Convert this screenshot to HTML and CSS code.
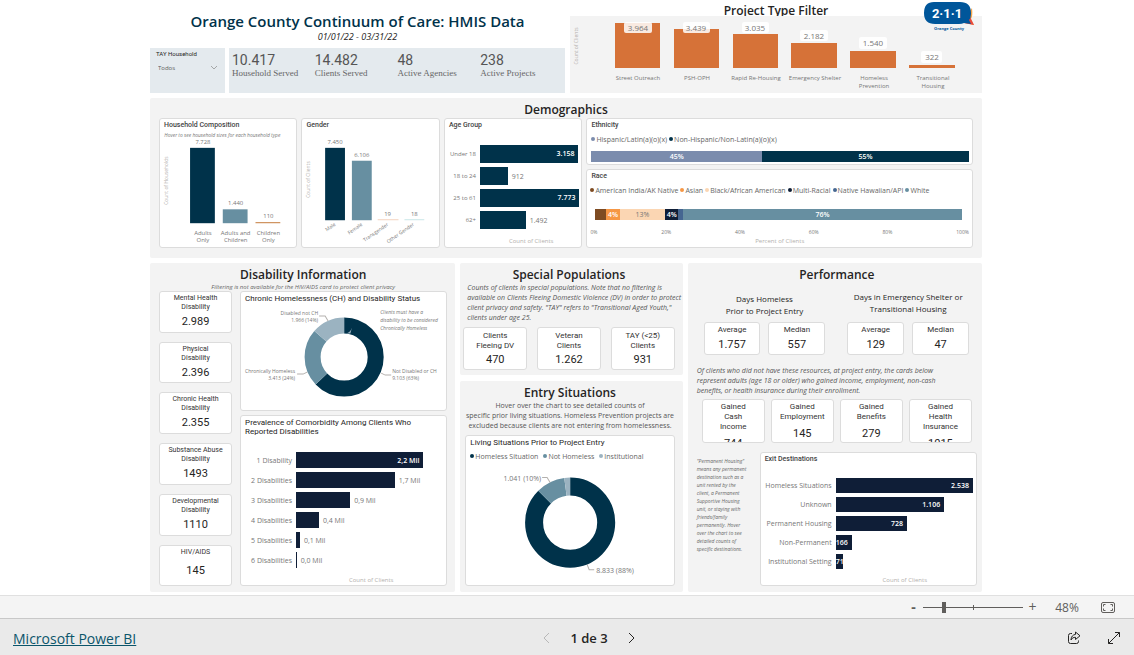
FILE: index.html
```html
<!DOCTYPE html>
<html lang="en">
<head>
<meta charset="utf-8">
<title>Orange County Continuum of Care: HMIS Data</title>
<link rel="stylesheet" href="styles.css">
</head>
<body>
<main class="report">
  <div class="top">
    <header class="intro">
      <h1 class="title">Orange County Continuum of Care: HMIS Data</h1>
      <p class="period">01/01/22 - 03/31/22</p>
      <div class="intro-row">
        <div class="slicer">
          <label class="slicer-label" for="tay">TAY Household</label>
          <select class="slicer-select" id="tay"><option>Todos</option></select>
          <svg class="slicer-arrow" viewBox="0 0 8 5"><path d="M1 1l3 3 3-3"/></svg>
        </div>
        <dl class="kpis">
          <div class="kpi"><dd>10.417</dd><dt>Household Served</dt></div>
          <div class="kpi"><dd>14.482</dd><dt>Clients Served</dt></div>
          <div class="kpi"><dd>48</dd><dt>Active Agencies</dt></div>
          <div class="kpi"><dd>238</dd><dt>Active Projects</dt></div>
        </dl>
      </div>
    </header>
    <section class="filter">
      <h2 class="filter-title">Project Type Filter</h2>
      <svg class="filter-chart" viewBox="0 0 412 77">
        <g fill="#d67238">
          <rect x="45" y="7" width="45" height="45"/><rect x="104" y="13" width="45" height="39"/><rect x="163" y="18" width="45" height="34"/>
          <rect x="221" y="27" width="46" height="25"/><rect x="280" y="35" width="46" height="17"/><rect x="339" y="49" width="46" height="3"/>
        </g>
        <g fill="#fff" fill-opacity=".85">
          <rect x="54" y="6" width="28" height="11" rx="2"/><rect x="113" y="6" width="27" height="11" rx="2"/><rect x="172" y="6" width="27" height="11" rx="2"/>
          <rect x="230" y="14" width="28" height="11" rx="2"/><rect x="289" y="21" width="28" height="12" rx="2"/><rect x="351" y="35" width="21" height="12" rx="2"/>
        </g>
        <g class="t8 mid grey">
          <text x="68" y="15">3.964</text><text x="126" y="15">3.439</text><text x="185" y="15">3.035</text><text x="244" y="23">2.182</text><text x="303" y="30">1.540</text><text x="362" y="44">322</text>
        </g>
        <g class="t6 mid grey">
          <text x="68" y="64">Street Outreach</text><text x="127" y="64">PSH-OPH</text><text x="186" y="64">Rapid Re-Housing</text><text x="245" y="64">Emergency Shelter</text>
          <text x="304" y="64">Homeless</text><text x="304" y="72">Prevention</text><text x="363" y="64">Transitional</text><text x="363" y="72">Housing</text>
        </g>
        <text class="t5 mid pale" transform="translate(8 30) rotate(-90)">Count of Clients</text>
      </svg>
      <svg class="logo" viewBox="0 0 52 31">
        <path d="M40 20l9-13q1 8-1 11l3 6-9-2z" fill="#f6a54a"/>
        <path d="M40 20l7-4 4 8-10-2z" fill="#e8483c"/>
        <path d="M11 1h26q11 0 11 11v1q0 4-2 6l2 4-7-1q-2 1-5 1H12Q1 23 1 12T11 1z" fill="#00569a"/>
        <text class="logo-num" x="24" y="17">2·1·1</text>
        <text class="logo-name" x="26" y="29">Orange County</text>
      </svg>
    </section>
  </div>

  <section class="panel demographics">
    <h2 class="heading">Demographics</h2>
    <div class="demo-row">
      <article class="card">
        <h3 class="card-title">Household Composition</h3>
        <svg class="fill-chart" viewBox="0 0 137 118">
          <text class="t5 italic grey" x="4" y="7">Hover to see household sizes for each household type</text>
          <rect x="30" y="18" width="25" height="76" fill="#00324a"/><rect x="63" y="80" width="25" height="14" fill="#678fa1"/><rect x="96" y="93" width="25" height="1" fill="#c47a3a"/>
          <g class="t6 mid grey"><text x="43" y="14">7.728</text><text x="76" y="76">1.440</text><text x="109" y="89">110</text>
          <text x="43" y="106">Adults</text><text x="43" y="113">Only</text><text x="76" y="106">Adults and</text><text x="76" y="113">Children</text><text x="109" y="106">Children</text><text x="109" y="113">Only</text></g>
          <text class="t5 mid pale" transform="translate(8 51) rotate(-90)">Count of Households</text>
        </svg>
      </article>
      <article class="card">
        <h3 class="card-title">Gender</h3>
        <svg class="fill-chart" viewBox="0 0 137 118">
          <rect x="23" y="18" width="20" height="73" fill="#00324a"/><rect x="50" y="31" width="20" height="60" fill="#678fa1"/><rect x="76" y="90" width="21" height="1" fill="#f3d3bf"/><rect x="103" y="90" width="20" height="1" fill="#c9e6e8"/>
          <g class="t6 mid grey"><text x="33" y="14">7.450</text><text x="60" y="27">6.106</text><text x="86" y="87">19</text><text x="113" y="87">18</text></g>
          <g class="t5 end grey"><text transform="translate(34 96) rotate(-35)">Male</text><text transform="translate(61 96) rotate(-35)">Female</text><text transform="translate(87 96) rotate(-35)">Transgender</text><text transform="translate(113 96) rotate(-35)">Other Gender</text></g>
          <text class="t5 mid pale" transform="translate(8 50) rotate(-90)">Count of Clients</text>
        </svg>
      </article>
      <article class="card">
        <h3 class="card-title">Age Group</h3>
        <div class="bars bars-age">
          <span>Under 18</span><div class="track"><b class="bar" style="width:99%">3.158</b></div>
          <span>18 to 24</span><div class="track"><b class="bar" style="width:28%"></b><i>912</i></div>
          <span>25 to 61</span><div class="track"><b class="bar" style="width:100%">7.773</b></div>
          <span>62+</span><div class="track"><b class="bar" style="width:46%"></b><i>1.492</i></div>
        </div>
        <p class="axis-title age-axis">Count of Clients</p>
      </article>
      <div class="stack">
        <article class="card ethnicity">
          <h3 class="card-title">Ethnicity</h3>
          <ul class="legend"><li class="c-slate">Hispanic/Latin(a)(o)(x)</li><li class="c-dark">Non-Hispanic/Non-Latin(a)(o)(x)</li></ul>
          <div class="strip"><b class="c-slate" style="width:45.2%">45%</b><b class="c-dark" style="width:54.8%">55%</b></div>
        </article>
        <article class="card race">
          <h3 class="card-title">Race</h3>
          <ul class="legend"><li class="c-brown">American India/AK Native</li><li class="c-orange">Asian</li><li class="c-peach">Black/African American</li><li class="c-navy">Multi-Racial</li><li class="c-blue">Native Hawaiian/API</li><li class="c-teal">White</li></ul>
          <div class="strip"><b class="c-brown" style="width:3%"></b><b class="c-orange" style="width:3.6%">4%</b><b class="c-peach" style="width:12.5%">13%</b><b class="c-navy" style="width:3.5%">4%</b><b class="c-blue" style="width:1.3%"></b><b class="c-teal" style="width:76.1%">76%</b></div>
          <div class="axis"><span>0%</span><span>20%</span><span>40%</span><span>60%</span><span>80%</span><span>100%</span></div>
          <p class="axis-title">Percent of Clients</p>
        </article>
      </div>
    </div>
  </section>

  <div class="lower">
    <section class="panel disability">
      <h2 class="heading">Disability Information</h2>
      <p class="sub">Filtering is not available for the HIV/AIDS card to protect client privacy</p>
      <div class="dis-row">
        <div class="dis-cards">
          <div class="card stat"><h3>Mental Health<br>Disability</h3><p>2.989</p></div>
          <div class="card stat"><h3>Physical<br>Disability</h3><p>2.396</p></div>
          <div class="card stat"><h3>Chronic Health<br>Disability</h3><p>2.355</p></div>
          <div class="card stat"><h3>Substance Abuse<br>Disability</h3><p>1493</p></div>
          <div class="card stat"><h3>Developmental<br>Disability</h3><p>1110</p></div>
          <div class="card stat"><h3>HIV/AIDS</h3><p>145</p></div>
        </div>
        <div class="dis-charts">
          <article class="card">
            <h3 class="card-title big">Chronic Homelessness (CH) and Disability Status</h3>
            <svg class="fill-chart" viewBox="0 0 205 107">
              <g fill="none" stroke-width="16" transform="rotate(-90 103 54)">
                <circle cx="103" cy="54" r="31.5" pathLength="100" stroke="#00324a" stroke-dasharray="62.8 37.2"/>
                <circle cx="103" cy="54" r="31.5" pathLength="100" stroke="#678fa1" stroke-dasharray="23.6 76.4" stroke-dashoffset="-62.8"/>
                <circle cx="103" cy="54" r="31.5" pathLength="100" stroke="#9bb3c1" stroke-dasharray="13.6 86.4" stroke-dashoffset="-86.4"/>
              </g>
              <g class="lead"><path d="M78 13h6l3 5M56 71h6l4-2M140 70l4 2h6"/></g>
              <g class="t5 end grey"><text x="77" y="12">Disabled not CH</text><text x="77" y="19">1.966 (14%)</text><text x="54" y="70">Chronically Homeless</text><text x="54" y="77">3.413 (24%)</text></g>
              <g class="t5 grey"><text x="151" y="70">Not Disabled or CH</text><text x="151" y="77">9.103 (63%)</text></g>
              <g class="t5 italic grey"><text x="139" y="11">Clients must have a</text><text x="139" y="19">disability to be considered</text><text x="139" y="27">Chronically Homeless</text></g>
            </svg>
          </article>
          <article class="card">
            <h3 class="card-title big wide">Prevalence of Comorbidity Among Clients Who Reported Disabilities</h3>
            <div class="bars bars-com">
              <span>1 Disability</span><div class="track"><b class="bar" style="width:100%">2,2 Mil</b></div>
              <span>2 Disabilities</span><div class="track"><b class="bar" style="width:77.5%"></b><i>1,7 Mil</i></div>
              <span>3 Disabilities</span><div class="track"><b class="bar" style="width:42.5%"></b><i>0,9 Mil</i></div>
              <span>4 Disabilities</span><div class="track"><b class="bar" style="width:18%"></b><i>0,4 Mil</i></div>
              <span>5 Disabilities</span><div class="track"><b class="bar" style="width:3%"></b><i>0,1 Mil</i></div>
              <span>6 Disabilities</span><div class="track"><b class="bar" style="width:0.5%"></b><i>0,0 Mil</i></div>
            </div>
            <p class="axis-title com-axis">Count of Clients</p>
          </article>
        </div>
      </div>
    </section>

    <div class="middle">
      <section class="panel special">
        <h2 class="heading">Special Populations</h2>
        <p class="note">Counts of clients in special populations. Note that no filtering is<br>available on Clients Fleeing Domestic Violence (DV) in order to protect<br>client privacy and safety. "TAY" refers to "Transitional Aged Youth,"<br>clients under age 25.</p>
        <div class="sp-cards">
          <div class="card stat lg"><h3>Clients<br>Fleeing DV</h3><p>470</p></div>
          <div class="card stat lg"><h3>Veteran<br>Clients</h3><p>1.262</p></div>
          <div class="card stat lg"><h3>TAY (&lt;25)<br>Clients</h3><p>931</p></div>
        </div>
      </section>
      <section class="panel entry">
        <h2 class="heading">Entry Situations</h2>
        <p class="entry-note">Hover over the chart to see detailed counts of<br>specific prior living situations. Homeless Prevention projects are<br>excluded because clients are not entering from homelessness.</p>
        <article class="card">
          <h3 class="card-title big">Living Situations Prior to Project Entry</h3>
          <ul class="legend lg"><li class="c-dark">Homeless Situation</li><li class="c-teal">Not Homeless</li><li class="c-light">Institutional</li></ul>
          <svg class="fill-chart" viewBox="0 -2 207 119">
            <g fill="none" stroke-width="18" transform="rotate(-90 104 57)">
              <circle cx="104" cy="57" r="36" pathLength="100" stroke="#00324a" stroke-dasharray="87.5 12.5"/>
              <circle cx="104" cy="57" r="36" pathLength="100" stroke="#678fa1" stroke-dasharray="10.4 89.6" stroke-dashoffset="-87.5"/>
              <circle cx="104" cy="57" r="36" pathLength="100" stroke="#9bb3c1" stroke-dasharray="2.1 97.9" stroke-dashoffset="-97.9"/>
            </g>
            <g class="lead"><path d="M76 12h5l3 5M121 99l2 5h5"/></g>
            <g class="t7 grey"><text class="end" x="75" y="15">1.041 (10%)</text><text x="130" y="107">8.833 (88%)</text></g>
          </svg>
        </article>
      </section>
    </div>

    <section class="panel performance">
      <h2 class="heading">Performance</h2>
      <div class="days">
        <div class="days-group">
          <h3 class="days-title low">Days Homeless<br>Prior to Project Entry</h3>
          <div class="pair"><div class="card stat lg"><h3>Average</h3><p>1.757</p></div><div class="card stat lg"><h3>Median</h3><p>557</p></div></div>
        </div>
        <div class="days-group">
          <h3 class="days-title">Days in Emergency Shelter or<br>Transitional Housing</h3>
          <div class="pair"><div class="card stat lg"><h3>Average</h3><p>129</p></div><div class="card stat lg"><h3>Median</h3><p>47</p></div></div>
        </div>
      </div>
      <p class="note perf-note">Of clients who did not have these resources, at project entry, the cards below<br>represent adults (age 18 or older) who gained income, employment, non-cash<br>benefits, or health insurance during their enrollment.</p>
      <div class="gained">
        <div class="card stat lg"><h3>Gained<br>Cash<br>Income</h3><p>744</p></div>
        <div class="card stat lg"><h3>Gained<br>Employment</h3><p>145</p></div>
        <div class="card stat lg"><h3>Gained<br>Benefits</h3><p>279</p></div>
        <div class="card stat lg"><h3>Gained<br>Health<br>Insurance</h3><p>1015</p></div>
      </div>
      <div class="exit">
        <p class="exit-note">"Permanent Housing"<br>means any permanent<br>destination such as a<br>unit rented by the<br>client, a Permanent<br>Supportive Housing<br>unit, or staying with<br>friends/family<br>permanently. Hover<br>over the chart to see<br>detailed counts of<br>specific destinations.</p>
        <article class="card">
          <h3 class="card-title">Exit Destinations</h3>
          <div class="bars bars-exit">
            <span>Homeless Situations</span><div class="track"><b class="bar" style="width:100%">2.538</b></div>
            <span>Unknown</span><div class="track"><b class="bar" style="width:79%">1.106</b></div>
            <span>Permanent Housing</span><div class="track"><b class="bar" style="width:52%">728</b></div>
            <span>Non-Permanent</span><div class="track"><b class="bar tight" style="width:12%">166</b></div>
            <span>Institutional Setting</span><div class="track"><b class="bar tight" style="width:5.2%">71</b></div>
          </div>
          <p class="axis-title exit-axis">Count of Clients</p>
        </article>
      </div>
    </section>
  </div>
</main>

<div class="zoombar">
  <button class="zoom-btn minus" type="button" aria-label="Zoom out">-</button>
  <input class="zoom-range" type="range" min="0" max="100" value="20" aria-label="Zoom">
  <button class="zoom-btn" type="button" aria-label="Zoom in">+</button>
  <output class="zoom-value">48%</output>
  <button class="icon-btn fit" type="button" aria-label="Fit to page">
    <svg viewBox="0 0 14 11"><rect x=".5" y=".5" width="13" height="10" rx="1.500"/><path d="M2.500 4.500v-2h2M9.500 2.500h2v2M11.500 6.500v2h-2M4.500 8.500h-2v-2"/></svg>
  </button>
</div>
<footer class="footer">
  <a class="brand" href="#">Microsoft Power BI</a>
  <nav class="pager">
    <button class="icon-btn prev" type="button" aria-label="Previous page"><svg viewBox="0 0 8 12"><path d="M7 1L2 6l5 5"/></svg></button>
    <span>1 de 3</span>
    <button class="icon-btn next" type="button" aria-label="Next page"><svg viewBox="0 0 8 12"><path d="M1 1l5 5-5 5"/></svg></button>
  </nav>
  <div class="actions">
    <button class="icon-btn act" type="button" aria-label="Share"><svg viewBox="0 0 14 14"><path d="M5 2.500H3.500a2 2 0 0 0-2 2v6a2 2 0 0 0 2 2h6a2 2 0 0 0 2-2V9.500M8.500 1l4.500 3.800-4.500 3.700V6.300C6.500 6.300 5 7 4 9c0-3.500 2-5.300 4.500-5.600z"/></svg></button>
    <button class="icon-btn act" type="button" aria-label="Full screen"><svg viewBox="0 0 14 14"><path d="M1.500 12.500l11-11M8 1.500h4.500V6M6 12.500H1.500V8"/></svg></button>
  </div>
</footer>
</body>
</html>
```
FILE: styles.css
```css
* { box-sizing: border-box; }
body {
  margin: 0; min-height: 100vh; display: flex; flex-direction: column;
  background: #fff; color: #252423;
  font-family: "Open Sans", "Noto Sans", sans-serif; font-size: 7px;
}
h1, h2, h3, p, dl, dd, dt, ul { margin: 0; padding: 0; font-weight: 400; }
ul { list-style: none; }
button, select, input { font: inherit; }

.report { flex: 1; padding: 0 152px 3px 150px; display: flex; flex-direction: column; gap: 5px; }

/* top band */
.top { display: grid; grid-template-columns: 415fr 412fr; column-gap: 5px; height: 93px; }
.intro { display: flex; flex-direction: column; text-align: center; padding-top: 11px; }
.title { font-size: 15px; font-weight: 600; line-height: 20px; color: #00324a; white-space: nowrap; }
.period { font-size: 9px; line-height: 12px; font-style: italic; }
.intro-row { flex: 1; margin-top: 5px; display: grid; grid-template-columns: 75fr 336fr; gap: 4px; text-align: left; }
.slicer { position: relative; background: #e4eaee; padding: 1px 6px; }
.slicer-label { display: block; font: 400 6px/10px Roboto, sans-serif; }
.slicer-select {
  appearance: none; border: 0; background: none; width: 100%; padding: 0 2px; margin-top: 4px;
  font-size: 6px; line-height: 10px; height: 10px; color: #605e5c; display: block;
}
.slicer-arrow { position: absolute; right: 7px; top: 17px; width: 8px; height: 5px; fill: none; stroke: #888; stroke-width: .7; pointer-events: none; }
.kpis { background: #e4eaee; display: grid; grid-template-columns: repeat(4, 1fr); padding: 4px 2px 0 3px; }
.kpi dd { font: 14px/16px Roboto, sans-serif; color: #555; }
.kpi dt { font: 9px/10px "Liberation Serif", serif; color: #666; white-space: nowrap; }

.filter { position: relative; display: flex; flex-direction: column; }
.filter-title { font-size: 12px; font-weight: 600; line-height: 16px; height: 16px; padding-top: 3px; text-align: center; }
.filter-chart { display: block; width: 100%; flex: 1; min-height: 0; background: #f3f3f3; }
.logo { position: absolute; right: 7px; top: 1px; width: 52px; height: 31px; }
.logo-num { font: 700 13px Roboto, sans-serif; fill: #fff; text-anchor: middle; }
.logo-name { font-size: 4px; font-weight: 700; fill: #00569a; text-anchor: middle; }

/* chart text */
.t5 { font-size: 5px; } .t6 { font-size: 6px; } .t7 { font-size: 7px; } .t8 { font-size: 8px; }
.mid { text-anchor: middle; } .end { text-anchor: end; }
.italic { font-style: italic; }
.grey { fill: #777; } .pale { fill: #b3b0ad; }
.lead { fill: none; stroke: #b3b0ad; stroke-width: 1; }
.fill-chart { display: block; width: 100%; flex: 1; min-height: 0; }

/* panels and cards */
.panel { background: #f3f3f3; border-radius: 2px; display: flex; flex-direction: column; min-width: 0; }
.heading { font-size: 12px; font-weight: 600; line-height: 16px; text-align: center; padding-top: 4px; white-space: nowrap; }
.card { background: #fff; border: 1px solid #dcdcdc; border-radius: 3px; display: flex; flex-direction: column; min-width: 0; overflow: hidden; }
.card-title { font: 500 7px/9px Roboto, sans-serif; padding: 2px 4px 0; white-space: nowrap; color: #444; }
.card-title.big { font-size: 8px; font-weight: 400; line-height: 9px; color: #252423; }
.card-title.wide { white-space: normal; }

.demographics { padding: 0 9px 10px; height: 160px; }
.demo-row { flex: 1; display: grid; grid-template-columns: 139fr 139fr 139fr 388fr; gap: 4px; min-height: 0; }
.stack { display: grid; grid-template-rows: 47fr 79fr; gap: 4px; min-width: 0; }

.bars { display: grid; align-items: center; color: #777; }
.bars > span { text-align: right; padding-right: 4px; white-space: nowrap; }
.track { display: flex; align-items: center; min-width: 0; }
.track i { font-style: normal; padding-left: 4px; white-space: nowrap; }
.bar { display: block; flex: none; background: #0f1e37; color: #fff; text-align: right; padding-right: 4px; font-weight: 600; white-space: nowrap; }
.bar:empty, .bar.tight { padding-right: 0; }
.bar.tight { overflow: hidden; text-align: left; }
.bars-age { grid-template-columns: 35px 1fr; row-gap: 4px; margin: 15px 2px 0 0; }
.bars-age > span { font-size: 6px; }
.bars-age .bar { height: 18px; line-height: 18px; background: #00324a; }
.bars-com { grid-template-columns: 55px 1fr; row-gap: 4px; margin: 16px 23px 0 0; }
.bars-com .bar { height: 16px; line-height: 17px; }
.bars-exit { grid-template-columns: 75px 1fr; row-gap: 4px; margin: 14px 3px 0 0; }
.bars-exit .bar { height: 15px; line-height: 15px; }
.axis-title { font-size: 6px; line-height: 8px; text-align: center; color: #b3b0ad; }
.age-axis { padding: 8px 0 0 36px; }
.com-axis { padding: 8px 0 0 55px; }
.exit-axis { padding: 7px 0 0 73px; }

.legend { display: flex; gap: 2px; padding: 0 4px; font-size: 7px; line-height: 8px; color: #666; white-space: nowrap; }
.legend li::before { content: ""; display: inline-block; width: 4px; height: 4px; border-radius: 50%; margin-right: 1px; vertical-align: 1px; background: var(--c); }
.legend.lg { line-height: 9px; margin-top: 5px; gap: 5px; }
.strip { display: flex; height: 11px; font-size: 7px; line-height: 11px; color: #fff; text-align: center; }
.strip b { background: var(--c); font-weight: 600; white-space: nowrap; }
.c-slate { --c: #7b8cad; } .c-dark { --c: #00324a; } .c-brown { --c: #7e4b22; } .c-orange { --c: #f69745; }
.c-peach { --c: #fbd6b3; } .c-navy { --c: #0f1e37; } .c-blue { --c: #456691; } .c-teal { --c: #678fa1; } .c-light { --c: #9bb3c1; }
.strip .c-peach { color: #777; font-weight: 400; }
.ethnicity .legend { margin-top: 6px; }
.ethnicity .strip { margin: 7px 3px 0 4px; }
.race .legend { margin-top: 6px; padding-left: 3px; }
.race .strip { margin: 14px 10px 0 8px; }
.axis { display: flex; justify-content: space-between; margin: 8px 3px 0 3px; font-size: 5px; line-height: 8px; color: #777; }
.race .axis-title { margin-top: 1px; }

/* stat cards */
.stat { text-align: center; padding-top: 2px; }
.stat h3 { font: 7px/9px Roboto, sans-serif; color: #333; white-space: nowrap; }
.stat p { font: 11px/14px Roboto, sans-serif; margin: auto 0; }
.stat.lg h3 { font-size: 8px; line-height: 10px; }

/* lower band */
.lower { flex: 1; display: grid; grid-template-columns: 305fr 222fr 294fr; gap: 5px; }
.disability { padding: 0 8px 6px 9px; }
.sub { font-size: 6px; line-height: 8px; font-style: italic; color: #666; text-align: center; }
.dis-row { flex: 1; display: grid; grid-template-columns: 73fr 207fr; gap: 8px; }
.dis-cards { display: grid; grid-template-rows: repeat(6, 1fr); gap: 9px; }
.dis-charts { display: grid; grid-template-rows: 120fr 171fr; gap: 4px; }

.middle { display: grid; grid-template-columns: minmax(0, 1fr); grid-template-rows: 112fr 211fr; gap: 6px; min-width: 0; }
.special { padding: 0 8px 5px 3px; }
.note { font-size: 7px; line-height: 10px; font-style: italic; color: #555; white-space: nowrap; }
.special .note { padding: 0 0 4px 4px; }
.special .stat { padding-top: 3px; }
.sp-cards { flex: 1; display: grid; grid-template-columns: repeat(3, 1fr); gap: 10px; }
.entry { padding: 0 8px 6px 5px; }
.entry-note { font-size: 7px; line-height: 10px; color: #555; text-align: center; white-space: nowrap; margin: 0 -4px; padding-bottom: 4px; }
.entry .card { flex: 1; }

.performance { padding: 0 5px 6px 9px; }
.days { display: grid; grid-template-columns: 1fr 1fr; gap: 22px; margin-top: 8px; padding: 0 8px 0 7px; }
.days-group { display: flex; flex-direction: column; min-width: 0; }
.days-title { font-size: 8px; line-height: 12px; height: 31px; text-align: center; white-space: nowrap; }
.days-title.low { padding-top: 2px; }
.pair { display: grid; grid-template-columns: 1fr 1fr; gap: 8px; height: 33px; }
.perf-note { padding-top: 11px; }
.gained { display: grid; grid-template-columns: repeat(4, 1fr); gap: 6px; height: 44px; margin: 3px 5px 0; }
.gained .stat p { flex: none; margin: 5px 0 0; }
.exit { flex: 1; margin-top: 9px; display: grid; grid-template-columns: 57px 1fr; gap: 6px; }
.exit-note { font-size: 5px; line-height: 8px; padding-top: 5px; font-style: italic; color: #666; white-space: nowrap; }

/* viewer chrome */
.zoombar { height: 24px; background: #f4f4f4; border-top: 1px solid #e0e0e0; border-bottom: 1px solid #c8c8c8; display: flex; align-items: center; justify-content: flex-end; padding-right: 19px; color: #605e5c; }
.zoom-btn, .icon-btn { border: 0; background: none; padding: 0; color: inherit; display: flex; align-items: center; justify-content: center; }
.zoom-btn { width: 15px; font-size: 14px; line-height: 20px; }
.zoom-btn.minus { font-weight: 700; }
.zoom-range { appearance: none; width: 100px; height: 12px; margin: 0 2px; background: linear-gradient(#605e5c, #605e5c) 50% 50% / 1px 5px no-repeat, linear-gradient(#605e5c, #605e5c) 50% 50% / 100% 1px no-repeat; }
.zoom-range::-webkit-slider-thumb { appearance: none; width: 4px; height: 11px; background: #605e5c; }
.zoom-value { font-size: 12px; width: 54px; text-align: center; }
.icon-btn svg { fill: none; stroke: currentColor; display: block; }
.fit svg { width: 14px; height: 11px; }
.fit { margin-left: 7px; }
.footer { height: 36px; background: #eaeaea; display: grid; grid-template-columns: 12fr auto 11fr; align-items: center; padding: 2px 13px 0; }
.brand { font-size: 14px; color: #0b556a; justify-self: start; }
.pager { display: flex; align-items: center; gap: 20px; font-size: 13px; font-weight: 600; }
.pager svg { width: 8px; height: 12px; }
.prev { color: #b8b8b8; }
.actions { display: flex; justify-content: flex-end; gap: 26px; }
.act svg { width: 14px; height: 14px; }
```
